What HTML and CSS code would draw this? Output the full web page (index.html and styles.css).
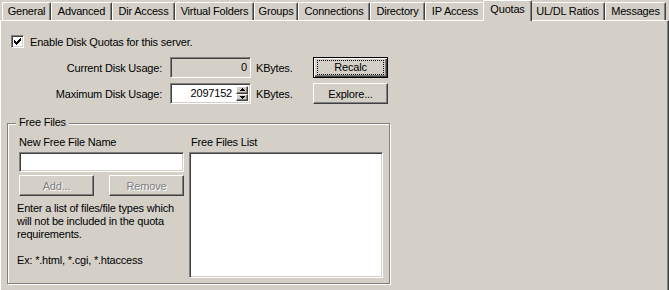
FILE: index.html
```html
<!DOCTYPE html>
<html lang="en">
<head>
    <meta charset="UTF-8">
    <title>Server Properties - Quotas</title>
    <link rel="stylesheet" href="styles.css">
</head>
<body>
    <!-- Tab strip -->
    <div class="tabs">
        <div class="tab tab-general">General</div>
        <div class="tab tab-advanced">Advanced</div>
        <div class="tab tab-dir">Dir Access</div>
        <div class="tab tab-virtual">Virtual Folders</div>
        <div class="tab tab-groups">Groups</div>
        <div class="tab tab-connections">Connections</div>
        <div class="tab tab-directory">Directory</div>
        <div class="tab tab-ip">IP Access</div>
        <div class="tab tab-quotas tab-selected">Quotas</div>
        <div class="tab tab-ratios">UL/DL Ratios</div>
        <div class="tab tab-messages">Messages</div>
    </div>

    <!-- Quotas page -->
    <div class="page">
        <div class="check-row">
            <span class="checkbox">
                <svg width="7" height="7" viewBox="0 0 7 7" shape-rendering="crispEdges">
                    <path d="M0 2h1v3h-1z M1 3h1v3h-1z M2 4h1v3h-1z M3 3h1v3h-1z M4 2h1v3h-1z M5 1h1v3h-1z M6 0h1v3h-1z" fill="#000"/>
                </svg>
            </span>
            <span>Enable Disk Quotas for this server.</span>
        </div>

        <div class="usage-row">
            <span class="usage-label">Current Disk Usage:</span>
            <div class="field field-disabled"><span class="field-value">0</span></div>
            <span class="unit">KBytes.</span>
            <button class="btn btn-default"><span class="focus">Recalc</span></button>
        </div>

        <div class="usage-row usage-row-second">
            <span class="usage-label">Maximum Disk Usage:</span>
            <div class="field">
                <span class="field-value">2097152</span>
                <span class="spin">
                    <span class="spin-btn spin-up">
                        <svg width="5" height="3" viewBox="0 0 5 3" shape-rendering="crispEdges"><path d="M2 0h1v1h-1z M1 1h3v1h-3z M0 2h5v1h-5z" fill="#000"/></svg>
                    </span>
                    <span class="spin-btn spin-down">
                        <svg width="5" height="3" viewBox="0 0 5 3" shape-rendering="crispEdges"><path d="M0 0h5v1h-5z M1 1h3v1h-3z M2 2h1v1h-1z" fill="#000"/></svg>
                    </span>
                </span>
            </div>
            <span class="unit">KBytes.</span>
            <button class="btn">Explore...</button>
        </div>

        <div class="group">
            <span class="group-title">Free Files</span>
            <div class="group-col group-col-left">
                <div class="col-label">New Free File Name</div>
                <div class="field field-text"></div>
                <div class="btn-row">
                    <button class="btn" disabled>Add...</button>
                    <button class="btn" disabled>Remove</button>
                </div>
                <p class="hint">Enter a list of files/file types which<br>will not be included in the quota<br>requirements.</p>
                <p class="hint hint-example">Ex: *.html, *.cgi, *.htaccess</p>
            </div>
            <div class="group-col group-col-right">
                <div class="col-label col-label-list">Free Files List</div>
                <div class="listbox"></div>
            </div>
        </div>
    </div>
</body>
</html>
```

FILE: styles.css
```css
* {
    margin: 0;
    padding: 0;
    box-sizing: border-box;
}

body {
    width: 669px;
    height: 290px;
    overflow: hidden;
    background: #d4d0c8;
    font-family: "Liberation Sans", Arial, sans-serif;
    font-size: 11px;
    letter-spacing: -0.2px;
    color: #000;
}

/* Tabs */

.tabs {
    display: flex;
    align-items: flex-end;
    height: 20px;
    padding-left: 2px;
}

.tab {
    height: 18px;
    line-height: 16px;
    text-align: center;
    white-space: nowrap;
    border-top: 1px solid #fff;
    border-left: 1px solid #fff;
    border-right: 1px solid #404040;
    border-radius: 2px 2px 0 0;
    box-shadow: inset -1px 0 #808080;
}

.tab-selected {
    position: relative;
    z-index: 1;
    height: 21px;
    line-height: 17px;
    margin: 0 -2px -1px;
    background: #d4d0c8;
}

.tab-general { width: 49px; }
.tab-advanced { width: 61px; }
.tab-dir { width: 63px; }
.tab-virtual { width: 79px; }
.tab-groups { width: 44px; }
.tab-connections { width: 72px; }
.tab-directory { width: 55px; }
.tab-ip { width: 60px; }
.tab-quotas { width: 49px; }
.tab-ratios { width: 75px; }
.tab-messages { width: 61px; }

/* Page body */

.page {
    height: 280px;
    border-top: 1px solid #fff;
    border-left: 1px solid #fff;
    border-right: 1px solid #404040;
    box-shadow: inset -1px 0 #808080;
}

.check-row {
    display: flex;
    align-items: center;
    gap: 6px;
    height: 13px;
    margin: 14px 0 0 10px;
}

.checkbox {
    display: flex;
    width: 13px;
    height: 13px;
    padding: 2px;
    background: #fff;
    border: 1px solid;
    border-color: #808080 #fff #fff #808080;
    box-shadow: inset 1px 1px #404040, inset -1px -1px #d4d0c8;
}

.usage-row {
    display: flex;
    align-items: center;
    height: 21px;
    margin-top: 9px;
}

.usage-row-second {
    margin-top: 5px;
}

.usage-label {
    width: 161px;
    margin-right: 8px;
    text-align: right;
}

.field {
    display: flex;
    width: 81px;
    height: 21px;
    padding: 2px;
    background: #fff;
    border: 1px solid;
    border-color: #808080 #fff #fff #808080;
    box-shadow: inset 1px 1px #404040, inset -1px -1px #d4d0c8;
}

.field-disabled {
    background: #d4d0c8;
}

.field-value {
    flex: 1;
    padding-right: 1px;
    line-height: 15px;
    text-align: right;
}

.spin {
    display: flex;
    flex-direction: column;
    width: 12px;
    margin-left: 3px;
}

.spin-btn {
    display: flex;
    align-items: center;
    justify-content: center;
    background: #d4d0c8;
    border: 1px solid;
    border-color: #fff #404040 #404040 #fff;
    box-shadow: inset -1px -1px #808080;
}

.spin-up {
    height: 9px;
}

.spin-down {
    height: 8px;
}

.unit {
    width: 62px;
    padding-left: 5px;
}

/* Buttons */

.btn {
    width: 75px;
    height: 21px;
    font: inherit;
    letter-spacing: inherit;
    color: #000;
    background: #d4d0c8;
    border: 1px solid;
    border-color: #fff #404040 #404040 #fff;
    box-shadow: inset -1px -1px #808080;
}

.btn:disabled {
    color: #808080;
    text-shadow: 1px 1px 0 #fff;
}

.btn-default {
    display: flex;
    padding: 2px 3px;
    border-color: #000;
    box-shadow: inset 1px 1px #fff, inset -1px -1px #404040, inset -2px -2px #808080;
}

.focus {
    flex: 1;
    line-height: 13px;
    border: 1px dotted #000;
}

/* Free files group */

.group {
    position: relative;
    display: flex;
    gap: 5px;
    width: 383px;
    height: 161px;
    margin: 19px 0 0 6px;
    padding: 12px 7px 5px 11px;
    border: 1px solid #808080;
    box-shadow: inset 1px 1px #fff, 1px 1px #fff;
}

.group-title {
    position: absolute;
    top: -8px;
    left: 8px;
    padding: 0 3px;
    line-height: 13px;
    background: #d4d0c8;
}

.group-col-left {
    width: 165px;
}

.group-col-right {
    width: 194px;
}

.col-label {
    height: 13px;
    line-height: 13px;
    margin-bottom: 3px;
    white-space: nowrap;
}

.col-label-list {
    padding-left: 2px;
}

.field-text {
    width: 165px;
    height: 20px;
}

.btn-row {
    display: flex;
    justify-content: space-between;
    margin-top: 3px;
}

.hint {
    margin: 6px 0 0 -2px;
    line-height: 13px;
    white-space: nowrap;
}

.hint-example {
    margin-top: 13px;
}

.listbox {
    width: 194px;
    height: 126px;
    background: #fff;
    border: 1px solid;
    border-color: #808080 #fff #fff #808080;
    box-shadow: inset 1px 1px #404040, inset -1px -1px #d4d0c8;
}
```
